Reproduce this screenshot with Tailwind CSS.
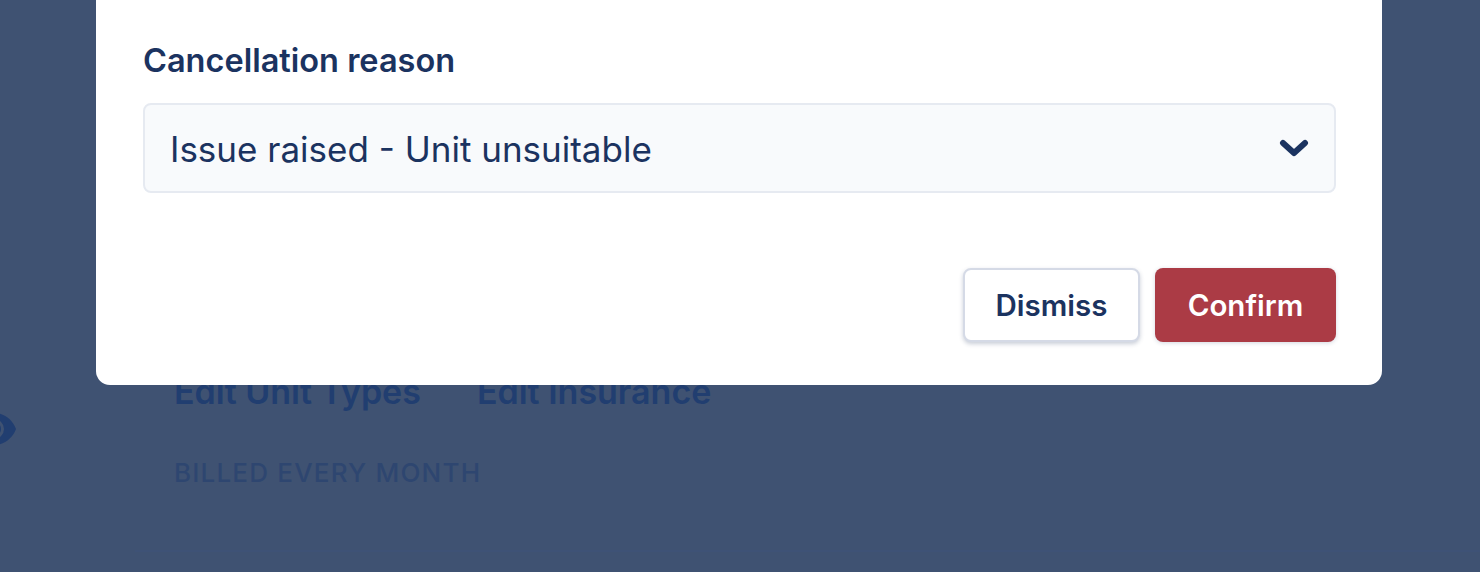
<!DOCTYPE html>
<html lang="en">

<head>
    <meta charset="UTF-8">
    <title>Cancel booking</title>
    <script src="https://cdn.jsdelivr.net/npm/@tailwindcss/browser@4"></script>
</head>

<body class="bg-[#3f5272] font-['Inter',sans-serif] overflow-hidden">
    <div class="relative w-[1480px] h-[572px] overflow-hidden">
        <!-- Page behind the overlay -->
        <div class="flex h-full">
            <div class="w-[132px] pt-[405px] shrink-0">
                <svg class="w-[48px] h-[48px] -ml-[30px]" viewBox="0 0 24 24" fill="#213e70">
                    <path fill-rule="evenodd" d="M12 4C7 4 2.700 7.300 1 12c1.700 4.700 6 8 11 8s9.300-3.300 11-8c-1.700-4.700-6-8-11-8zm0 13a5 5 0 1 1 0-10 5 5 0 0 1 0 10zm0-1.500a3.500 3.500 0 1 0 0-7 3.500 3.500 0 0 0 0 7z"/>
                </svg>
            </div>
            <div class="flex-1 pl-[42px] pt-[373px]">
                <div class="flex gap-[56px] text-[34px] leading-[38px] font-semibold text-[#213e70]">
                    <span>Edit Unit Types</span>
                    <span>Edit Insurance</span>
                </div>
                <p class="mt-[47px] text-[26px] leading-[30px] font-medium tracking-[1.2px] text-[#2e4670]">BILLED EVERY MONTH</p>
                <div class="mt-[62px] -ml-[39px] border-t-2 border-[#3e5276]"></div>
            </div>
        </div>

        <!-- Modal -->
        <div class="absolute left-[96px] top-[-40px] w-[1286px] h-[425px] bg-white rounded-b-[14px] px-[47px] pt-[81px]">
            <label class="block text-[32.500px] leading-[40px] font-semibold text-[#1b3360]">Cancellation reason</label>
            <div class="mt-[22px] h-[90px] w-[1193px] flex items-center justify-between pl-[25px] pr-[25px] bg-[#f8fafc] border-2 border-[#e6eaf1] rounded-[8px]">
                <span class="text-[35px] leading-[44px] pt-[2px] text-[#1b3360]">Issue raised - Unit unsuitable</span>
                <svg class="w-[30px] h-[20px]" viewBox="0 0 30 20" fill="none" stroke="#1b3360" stroke-width="6" stroke-linecap="round" stroke-linejoin="round">
                    <path d="M4 5l11 10L26 5"/>
                </svg>
            </div>
            <div class="mt-[75px] w-[1193px] flex justify-end gap-[15px]">
                <button class="h-[74px] w-[177px] bg-white border-2 border-[#d5dae6] rounded-[8px] shadow-[0_2px_4px_rgba(40,60,100,0.25)] text-[29.500px] font-semibold text-[#1b3360]">Dismiss</button>
                <button class="h-[74px] w-[181px] bg-[#ab3b45] rounded-[8px] shadow-[0_1px_4px_rgba(40,60,100,0.2)] text-[29.500px] font-semibold text-white">Confirm</button>
            </div>
        </div>
    </div>
</body>

</html>
